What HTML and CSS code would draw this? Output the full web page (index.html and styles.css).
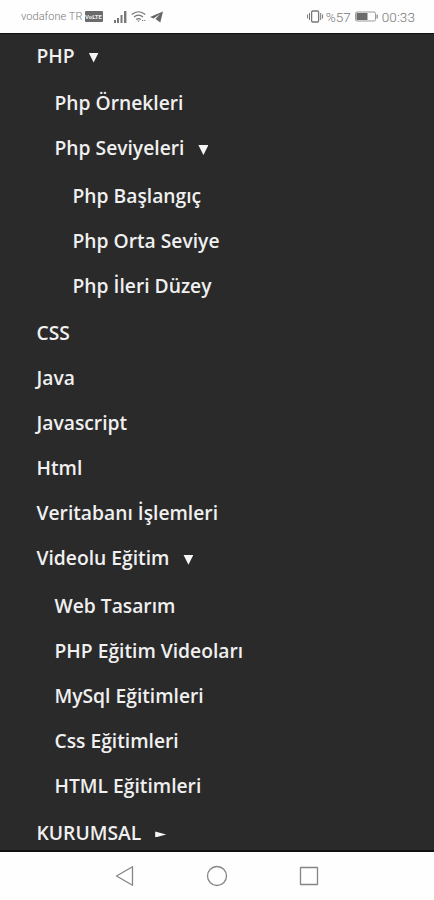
FILE: index.html
```
<!DOCTYPE html>
<html lang="tr">
<head>
    <meta charset="UTF-8">
    <meta name="viewport" content="width=device-width, initial-scale=1.0">
    <title>PHP Dersleri</title>
    <link rel="stylesheet" href="styles.css">
</head>
<body>
    <header class="status-bar">
        <div class="status-left">
            <span class="carrier">vodafone TR</span>
            <span class="volte">VoLTE</span>
            <svg class="signal" width="13" height="12" viewBox="0 0 13 12">
                <path d="M0 9h2v3H0zM3 7h2v5H3zM6.5 4h2v8h-2zM10 0h2.4v12H10z" fill="#777"/>
            </svg>
            <svg class="wifi" width="16" height="12" viewBox="0 0 16 12" fill="none" stroke="#777" stroke-width="1.2">
                <path d="M.7 3.5Q7.5-2 14.3 3.5M3 6Q7.5 2.4 12 6M5.2 8.4Q7.5 6.7 9.8 8.4"/>
                <path d="M6.3 9.6h2.4L7.5 11z" fill="#777" stroke="none"/>
                <path d="M11 9.5h3.5" stroke-dasharray="1.2 1"/>
            </svg>
            <svg class="plane" width="13" height="12" viewBox="0 0 13 12">
                <path d="M13 .5 0 6l3.6 1.5L10 3 5.5 8l4.8 3.5z" fill="#666"/>
            </svg>
        </div>
        <div class="status-right">
            <svg class="vibrate" width="17" height="13" viewBox="0 0 17 13" fill="none" stroke="#777">
                <rect x="4.6" y="1" width="7" height="11" rx="1.2" stroke-width="1.3"/>
                <path d="M2.5 3v7M.6 4.5v4M13.7 3v7M15.6 4.5v4"/>
            </svg>
            <span class="percent">%57</span>
            <svg class="battery" width="24" height="11" viewBox="0 0 24 11">
                <rect x=".5" y="1" width="20" height="9" rx="1.5" fill="none" stroke="#999"/>
                <path d="M1.5 2h11v7h-11z" fill="#6b6b6b"/>
                <path d="M21.5 3.5h1.3v4h-1.3z" fill="#888"/>
            </svg>
            <span class="clock">00:33</span>
        </div>
    </header>

    <nav class="menu">
        <ul>
            <li>
                <a>PHP <i class="arrow down"></i></a>
                <ul class="sub last-gap">
                    <li><a>Php Örnekleri</a></li>
                    <li>
                        <a>Php Seviyeleri <i class="arrow down"></i></a>
                        <ul class="sub">
                            <li><a>Php Başlangıç</a></li>
                            <li><a>Php Orta Seviye</a></li>
                            <li><a>Php İleri Düzey</a></li>
                        </ul>
                    </li>
                </ul>
            </li>
            <li><a>CSS</a></li>
            <li><a>Java</a></li>
            <li><a>Javascript</a></li>
            <li><a>Html</a></li>
            <li><a>Veritabanı İşlemleri</a></li>
            <li>
                <a>Videolu Eğitim <i class="arrow down"></i></a>
                <ul class="sub last-gap">
                    <li><a>Web Tasarım</a></li>
                    <li><a>PHP Eğitim Videoları</a></li>
                    <li><a>MySql Eğitimleri</a></li>
                    <li><a>Css Eğitimleri</a></li>
                    <li><a>HTML Eğitimleri</a></li>
                </ul>
            </li>
            <li><a>KURUMSAL <i class="arrow right"></i></a></li>
        </ul>
    </nav>

    <footer class="nav-bar">
        <svg width="22" height="22" viewBox="0 0 22 22"><path d="M18.5 1.8v18.4L2.5 11z"/></svg>
        <svg width="22" height="22" viewBox="0 0 22 22"><circle cx="11" cy="11" r="9.5"/></svg>
        <svg width="22" height="22" viewBox="0 0 22 22"><path d="M2.5 2.5h17v17h-17z"/></svg>
    </footer>
</body>
</html>
```
FILE: styles.css
```
* {
    box-sizing: border-box;
}
body {
    margin: 0;
    height: 900px;
    display: flex;
    flex-direction: column;
    background: #fefefe;
    font-family: "Open Sans", sans-serif;
    overflow: hidden;
}

/* Status bar */
.status-bar {
    height: 33px;
    flex: none;
    display: flex;
    justify-content: space-between;
    padding: 0 19px 0 21px;
    color: #777;
    font-family: Roboto, sans-serif;
    font-weight: 300;
}
.status-left,
.status-right {
    display: flex;
    align-items: center;
    height: 33px;
}
.carrier {
    font-size: 11px;
    letter-spacing: 0.05px;
}
.volte {
    width: 18px;
    height: 11px;
    margin: 0 11px 0 2px;
    border-radius: 1px;
    background: #6b6b6b;
    color: #eee;
    font-size: 6px;
    font-weight: 700;
    line-height: 11px;
    text-align: center;
}
.signal {
    margin-right: 4px;
}
.wifi {
    margin-right: 3px;
}
.vibrate {
    margin-right: 2px;
}
.percent {
    font-size: 13.5px;
}
.battery {
    margin: 0 3px 0 4px;
}
.clock {
    font-size: 13.5px;
    letter-spacing: 0.1px;
}

/* Menu */
.menu {
    height: 819px;
    flex: none;
    overflow: hidden;
    background: #2a2a2a;
    border-top: 1px solid #111;
    border-bottom: 2px solid #111;
}
.menu ul {
    list-style: none;
    margin: 0;
    padding: 0;
}
.menu > ul {
    margin-top: -1px;
    padding-left: 36.5px;
}
.menu a {
    display: flex;
    align-items: center;
    height: 45px;
    color: #f0f0f0;
    font-size: 19.25px;
    font-weight: 600;
    white-space: nowrap;
}
.menu .sub {
    padding: 2.4px 0 0 18px;
}
.menu .last-gap {
    padding-bottom: 2.4px;
}
.arrow {
    margin: 4px 0 0 14px;
    background: #f5f5f5;
}
.down {
    width: 10px;
    height: 10px;
    clip-path: polygon(0 0, 100% 0, 50% 100%);
}
.right {
    width: 11px;
    height: 6px;
    clip-path: polygon(0 0, 100% 50%, 0 100%);
}

/* Android buttons */
.nav-bar {
    flex: 1;
    display: flex;
    justify-content: center;
    gap: 70px;
    padding-top: 13px;
}
.nav-bar svg {
    fill: none;
    stroke: #858585;
    stroke-width: 1.3;
    stroke-linejoin: round;
}
```
